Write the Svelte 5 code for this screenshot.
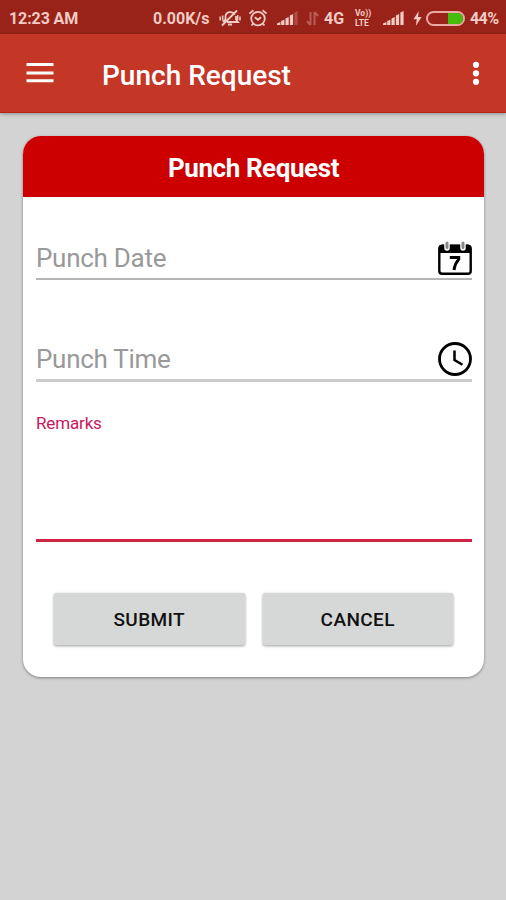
<script lang="ts">
	const title = 'Punch Request';
	let punchDate = $state('');
	let punchTime = $state('');
	let remarks = $state('');
	const battery = 44;

	function reset() {
		punchDate = '';
		punchTime = '';
		remarks = '';
	}
</script>

{#snippet signal(dimLast)}
	<svg class="signal" viewBox="0 0 21 16" width="21" height="16">
		<path d="M0 13.4 3.4 12v3H0zM4.2 11l3.2-1.2V15H4.2zM8.5 8.5l3.2-1.4V15H8.5zM12.9 5.5 16.1 4v11h-3.2z" />
		<path d="M17.4 2.5 20.6 1v14h-3.2z" opacity={dimLast ? 0.25 : 1} />
	</svg>
{/snippet}

<div class="screen">
	<div class="status">
		<span class="time">12:23 AM</span>
		<span class="speed">0.00K/s</span>
		<svg class="mute" viewBox="0 0 22 18" width="22" height="18">
			<g fill="none" stroke="currentColor" stroke-width="1.8">
				<path d="M4 13 6.5 10.5V7.5a4.7 4.7 0 0 1 9-1.6M17 7v3.5l2 2.5H8M9 15.5h4M3 16.5 18 1.5" />
				<path d="M1.2 7.5v4M3.7 6.5v5M18.7 6v5M21 7.5v4" stroke-width="1.5" />
			</g>
		</svg>
		<svg class="alarm" viewBox="0 0 20 18" width="20" height="18">
			<g fill="none" stroke="currentColor" stroke-width="1.8">
				<circle cx="10" cy="9.6" r="6.8" />
				<path d="m6.7 8.2 3.3 2.6 3-2.6M1.4 4.6l4-3.3M18.6 4.6l-4-3.3M5.2 14.5l-1.6 2M14.8 14.5l1.6 2" />
			</g>
		</svg>
		{@render signal(true)}
		<svg class="data" viewBox="0 0 13 15" width="13" height="15">
			<path
				d="M4.5 14V1M4.5 14 1 10M8.5 1v13M8.5 1 12 5"
				fill="none"
				stroke="currentColor"
				stroke-width="2"
			/>
		</svg>
		<span class="network">4G</span>
		<span class="volte"><span>Vo))</span><span>LTE</span></span>
		{@render signal(false)}
		<svg class="bolt" viewBox="0 0 9 15" width="9" height="15">
			<path d="M5.8 0 .5 8.2h3.3L2.8 15 8.6 6H5z" />
		</svg>
		<div class="battery"><div class="level" style="width: {battery}%"></div></div>
		<span class="percent">{battery}%</span>
	</div>

	<header>
		<svg viewBox="0 0 28 20" width="28" height="20" aria-label="Menu">
			<path d="M.5 0h27v3H.5zM.5 8.4h27v3H.5zM.5 16.2h27v3H.5z" />
		</svg>
		<h1>{title}</h1>
		<svg class="more" viewBox="0 0 8 26" width="8" height="26" aria-label="More">
			<circle cx="4" cy="4.8" r="3.1" />
			<circle cx="4" cy="13.3" r="3.1" />
			<circle cx="4" cy="21.8" r="3.1" />
		</svg>
	</header>

	<main>
		<section class="card">
			<h2>{title}</h2>
			<form onsubmit={(e) => e.preventDefault()}>
				<div class="field date">
					<input placeholder="Punch Date" bind:value={punchDate} />
					<svg viewBox="0 0 36 36" width="36" height="36">
						<rect x="2.3" y="6" width="31.4" height="27.7" rx="2.8" fill="#fff" stroke="#000" stroke-width="2.4" />
						<path d="M2 13V7.5q0-3 3-3h26q3 0 3 3V13z" />
						<path d="M10 3.5v4.5M26 3.5v4.5" stroke="#fff" stroke-width="5.5" stroke-linecap="round" />
						<path d="M10 3v4.5M26 3v4.5" stroke="#888" stroke-width="3" stroke-linecap="round" />
						<path d="M12.8 17.5h9v1.6q-4 4.7-4.8 10.9" fill="none" stroke="#000" stroke-width="2.9" />
					</svg>
				</div>
				<div class="field clock">
					<input placeholder="Punch Time" bind:value={punchTime} />
					<svg viewBox="0 0 36 36" width="36" height="36">
						<g fill="none" stroke="#000">
							<circle cx="18" cy="18" r="15.5" stroke-width="2.8" />
							<path d="M17.5 9.5V19l8 4.8" stroke-width="2.5" />
						</g>
					</svg>
				</div>
				<label>
					<span>Remarks</span>
					<textarea bind:value={remarks}></textarea>
				</label>
				<div class="actions">
					<button type="submit">SUBMIT</button>
					<button type="button" onclick={reset}>CANCEL</button>
				</div>
			</form>
		</section>
	</main>
</div>

<style>
	:global(body) {
		margin: 0;
	}
	.screen {
		display: flex;
		flex-direction: column;
		height: 900px;
		background: #d3d3d3;
		font-family: Roboto, sans-serif;
		overflow: hidden;
	}
	.status {
		display: flex;
		align-items: center;
		box-sizing: border-box;
		flex: none;
		height: 34px;
		padding: 2px 0 0 9px;
		background: #992318;
		color: #f2cbc5;
		font-size: 16px;
		font-weight: 700;
		white-space: nowrap;
		& > * {
			flex: none;
		}
		& svg {
			fill: currentColor;
		}
	}
	.time {
		width: 144px;
		letter-spacing: -0.1px;
	}
	.speed {
		width: 66px;
	}
	.mute {
		margin-right: 7px;
	}
	.alarm {
		margin-right: 9px;
	}
	.data {
		margin: 0 5px 0 8px;
		opacity: 0.35;
	}
	.network {
		width: 31px;
	}
	.volte {
		display: flex;
		flex-direction: column;
		width: 28px;
		font-size: 8.5px;
		line-height: 10px;
	}
	.bolt {
		margin: 0 4px 0 9px;
	}
	.battery {
		display: flex;
		justify-content: flex-end;
		box-sizing: border-box;
		width: 39px;
		height: 15px;
		margin-right: 5px;
		border: 2px solid #e9aaa3;
		border-radius: 8px;
		overflow: hidden;
	}
	.level {
		background: #44bd0c;
	}
	.percent {
		letter-spacing: -0.6px;
	}
	header {
		display: flex;
		align-items: center;
		box-sizing: border-box;
		flex: none;
		height: 79px;
		padding: 0 26px;
		background: #c43626;
		border-bottom: 1px solid #b52618;
		box-shadow: 0 1px 4px #0005;
		color: #fff;
		fill: #fff;
		z-index: 1;
	}
	h1 {
		flex: 1;
		margin: 4px 0 0 48px;
		font-size: 28px;
		font-weight: 500;
		line-height: 33px;
	}
	main {
		padding: 23px 22px 0 23px;
	}
	.card {
		height: 541px;
		border-radius: 18px;
		background: #fff;
		box-shadow: 0 1px 3px #0006;
		overflow: hidden;
	}
	h2 {
		height: 61px;
		margin: 0;
		background: #c00;
		color: #fff;
		font-size: 26px;
		font-weight: 700;
		letter-spacing: -0.42px;
		line-height: 65px;
		text-align: center;
	}
	form {
		padding: 40px 12px 0 13px;
	}
	.field {
		display: flex;
		align-items: center;
		box-sizing: border-box;
		height: 43px;
		border-bottom: 2px solid #b5b5b5;
		& svg {
			flex: none;
			margin-right: -1px;
		}
	}
	.clock {
		height: 44px;
		margin-top: 58px;
		border-bottom: 3px solid #ccc;
	}
	input,
	textarea {
		box-sizing: border-box;
		padding: 0;
		border: 0;
		outline: 0;
		background: none;
		font: 26px Roboto, sans-serif;
		letter-spacing: -0.28px;
	}
	input {
		flex: 1;
		min-width: 0;
	}
	input::placeholder {
		color: #999;
		opacity: 1;
	}
	label {
		display: block;
		margin-top: 31px;
		color: #c9175c;
		font-size: 17px;
		letter-spacing: -0.15px;
		line-height: 20px;
	}
	label span {
		display: block;
	}
	textarea {
		display: block;
		width: 100%;
		height: 109px;
		border-bottom: 3px solid #cf2443;
		resize: none;
	}
	.actions {
		display: flex;
		gap: 18px;
		padding: 51px 19px 0 18px;
	}
	button {
		flex: 1;
		height: 52px;
		padding: 0;
		border: 0;
		border-radius: 2px;
		background: #d6d8d7;
		box-shadow: 0 1px 3px #0006;
		color: #111;
		font: 500 19px Roboto, sans-serif;
		letter-spacing: 0.4px;
	}
</style>
